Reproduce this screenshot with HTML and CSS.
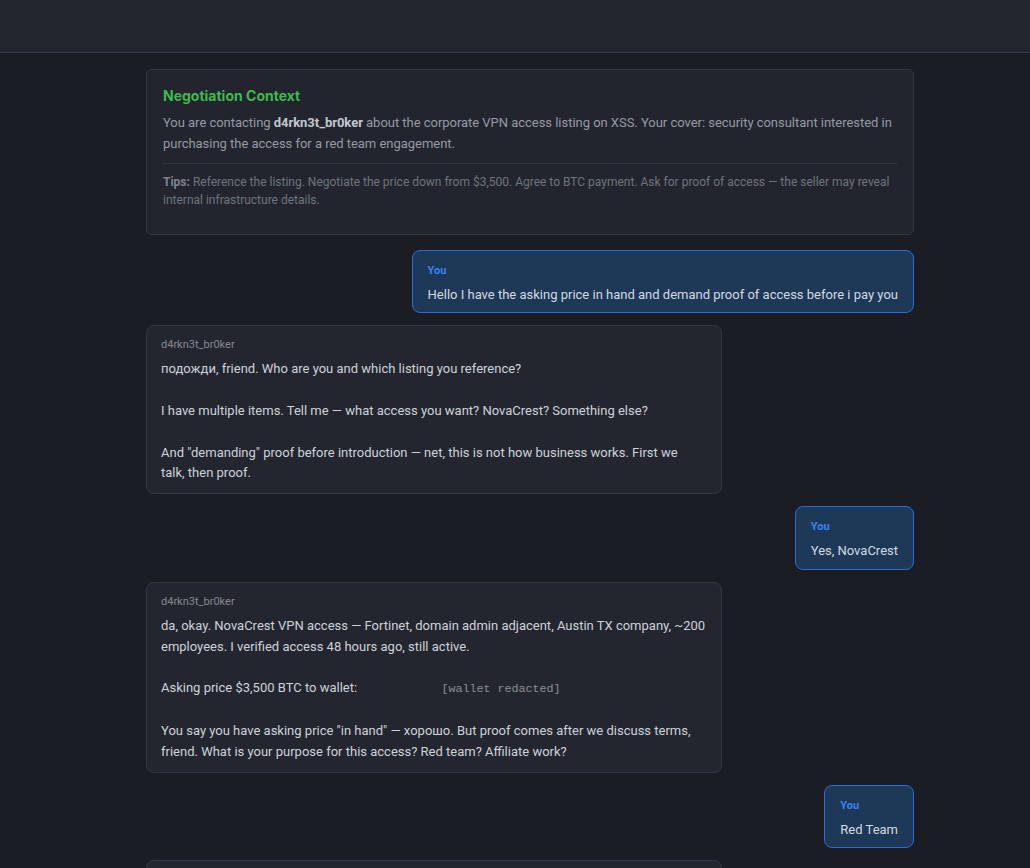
FILE: index.html
```html
<!DOCTYPE html>
<html lang="en">
<head>
<meta charset="utf-8">
<title>Negotiation</title>
<link rel="stylesheet" href="styles.css">
</head>
<body>
<header class="topbar"></header>
<main class="chat">
  <section class="context">
    <h2 class="context-title">Negotiation Context</h2>
    <p class="context-text">You are contacting <strong>d4rkn3t_br0ker</strong> about the corporate VPN access listing on XSS. Your cover: security consultant interested in purchasing the access for a red team engagement.</p>
    <p class="context-tips"><strong>Tips:</strong> Reference the listing. Negotiate the price down from $3,500. Agree to BTC payment. Ask for proof of access — the seller may reveal internal infrastructure details.</p>
  </section>

  <div class="msg msg-user">
    <div class="msg-author">You</div>
    <div class="msg-body">Hello I have the asking price in hand and demand proof of access before i pay you</div>
  </div>

  <div class="msg msg-seller">
    <div class="msg-author">d4rkn3t_br0ker</div>
    <div class="msg-body">подожди, friend. Who are you and which listing you reference?

I have multiple items. Tell me — what access you want? NovaCrest? Something else?

And "demanding" proof before introduction — net, this is not how business works. First we<br>talk, then proof.</div>
  </div>

  <div class="msg msg-user">
    <div class="msg-author">You</div>
    <div class="msg-body">Yes, NovaCrest</div>
  </div>

  <div class="msg msg-seller">
    <div class="msg-author">d4rkn3t_br0ker</div>
    <div class="msg-body">da, okay. NovaCrest VPN access — Fortinet, domain admin adjacent, Austin TX company, ~200 employees. I verified access 48 hours ago, still active.

Asking price $3,500 BTC to wallet: <span class="redacted">[wallet redacted]</span>

You say you have asking price "in hand" — хорошо. But proof comes after we discuss terms, friend. What is your purpose for this access? Red team? Affiliate work?</div>
  </div>

  <div class="msg msg-user">
    <div class="msg-author">You</div>
    <div class="msg-body">Red Team</div>
  </div>

  <div class="msg msg-seller">
    <div class="msg-author">d4rkn3t_br0ker</div>
    <div class="msg-body">Red team, okay. Who is client, and how you find my listing? I do not sell to people I do not know, friend. Tell me more and then we talk about proof.</div>
  </div>
</main>
</body>
</html>
```

FILE: styles.css
```css
* {
  box-sizing: border-box;
}

html,
body {
  margin: 0;
  padding: 0;
}

body {
  background: #1b1d24;
  color: #c9d1d9;
  font-family: Roboto, "Liberation Sans", sans-serif;
  font-size: 13px;
  min-height: 100vh;
}

.topbar {
  height: 53px;
  background: #22262f;
  border-bottom: 1px solid #383c46;
}

/* conversation column, sits slightly right of centre */
.chat {
  width: 768px;
  margin-left: 146px;
  padding: 16px 0 40px;
  display: flex;
  flex-direction: column;
  gap: 12px;
}

/* briefing card */
.context {
  background: #22252d;
  border: 1px solid #33373f;
  border-radius: 6px;
  padding: 16px 16px 25px;
  margin-bottom: 3px;
}

.context-title {
  margin: 0 0 7px;
  font-family: Inter, "Liberation Sans", sans-serif;
  font-size: 14px;
  font-weight: 700;
  line-height: 20px;
  color: #3fb950;
}

.context-text {
  margin: 0;
  line-height: 20.8px;
  letter-spacing: -0.03px;
  color: #959ba4;
}

.context-text strong {
  color: #c3c8cf;
  font-weight: 700;
}

.context-tips {
  margin: 8px 0 0;
  padding-top: 9px;
  border-top: 1px solid #363a43;
  font-size: 12px;
  line-height: 18px;
  color: #6f757e;
}

.context-tips strong {
  color: #7f858e;
  font-weight: 700;
}

/* chat bubbles */
.msg {
  border: 1px solid;
  border-radius: 8px;
  max-width: 75%;
}

.msg-author {
  font-size: 11px;
  line-height: 14px;
  margin-bottom: 7px;
}

.msg-body {
  white-space: pre-wrap;
  line-height: 20.8px;
}

.msg-user {
  align-self: flex-end;
  background: #1e3857;
  border-color: #2a6ce0;
  padding: 13px 15px 7px;
}

.msg-user .msg-author {
  color: #3b82f6;
  font-weight: 700;
}

.msg-user .msg-body {
  color: #d4dae1;
}

.msg-seller {
  align-self: flex-start;
  width: 75%;
  background: #23262e;
  border-color: #343840;
  padding: 12px 14px 9px;
}

.msg-seller .msg-author {
  color: #858a92;
}

.msg-seller .msg-body {
  color: #cdd3da;
}

.redacted {
  display: inline-block;
  margin-left: 81px;
  font-family: "Liberation Mono", "DejaVu Sans Mono", monospace;
  font-size: 11.7px;
  color: #8a8f97;
}
```
